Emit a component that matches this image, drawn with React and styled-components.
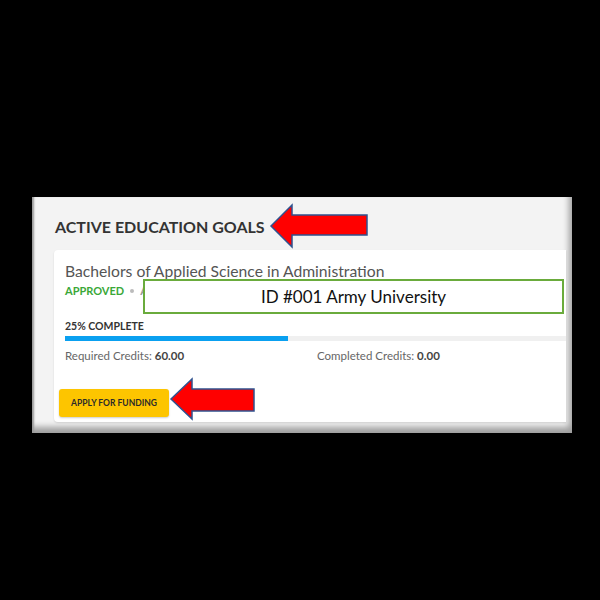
import React from "react";
import styled, { createGlobalStyle } from "styled-components";

const Global = createGlobalStyle`
  html, body { margin: 0; padding: 0; background: #000; }
  #root { width: 600px; height: 600px; background: #000; }
`;

const Page = styled.div`
  width: 600px;
  height: 600px;
  background: #000;
  padding: 197px 0 0 32px;
  box-sizing: border-box;
`;

const Frame = styled.div`
  position: relative;
  width: 540px;
  height: 236px;
  background: #f3f3f3;
  box-sizing: border-box;
  padding: 21px 6px 11px 22px;
  display: flex;
  flex-direction: column;
  box-shadow: inset 3px 0 2px -1px #9a9a9a, inset -7px -10px 6px -4px rgba(0, 0, 0, 0.35);
  font-family: Lato, "Liberation Sans", sans-serif;
`;

const Heading = styled.h2`
  margin: 0 0 14px 1px;
  font-size: 16px;
  line-height: 18px;
  font-weight: 700;
  color: #333;
`;

const Card = styled.div`
  flex: 1;
  background: #fff;
  border-radius: 4px 0 0 4px;
  box-shadow: 0 1px 2px rgba(0, 0, 0, 0.12);
  display: flex;
  flex-direction: column;
  padding: 11px 0 5px 0;
`;

const Body = styled.div`
  padding: 0 0 0 11px;
  display: flex;
  flex-direction: column;
`;

const Title = styled.div`
  font-size: 15.7px;
  line-height: 20px;
  color: #555;
`;

const StatusRow = styled.div`
  display: flex;
  align-items: center;
  gap: 6px;
  margin-top: 3px;
  font-size: 11px;
  line-height: 14px;
  font-weight: 700;
`;

const Status = styled.span`
  color: ${(p) => p.$color};
`;

const Dot = styled.span`
  width: 4px;
  height: 4px;
  border-radius: 50%;
  background: #bbb;
`;

const ProgressLabel = styled.div`
  margin-top: 22px;
  font-size: 10.5px;
  line-height: 13px;
  font-weight: 700;
  color: #333;
`;

const Track = styled.div`
  margin-top: 3px;
  height: 5px;
  background: #f0f0f0;
`;

const Fill = styled.div`
  height: 100%;
  background: #0aa0f0;
`;

const Credits = styled.div`
  display: grid;
  grid-template-columns: 252px auto;
  margin-top: 7px;
  font-size: 11.5px;
  line-height: 16px;
  color: #666;
`;

const Value = styled.b`
  color: #444;
`;

const Footer = styled.div`
  margin-top: auto;
  padding: 0 0 0 5px;
`;

const FundButton = styled.button`
  width: 110px;
  height: 28px;
  border: none;
  border-radius: 3px;
  background: #fdc500;
  box-shadow: 0 1px 2px rgba(0, 0, 0, 0.2);
  font-family: Lato, "Liberation Sans", sans-serif;
  font-size: 8.5px;
  font-weight: 700;
  color: #2a2a2a;
  padding: 0;
`;

const IdBox = styled.div`
  position: absolute;
  left: 111px;
  top: 82px;
  width: 421px;
  height: 35px;
  box-sizing: border-box;
  border: 2px solid #6aab3c;
  background: #fff;
  display: flex;
  align-items: center;
  justify-content: center;
  font-family: Lato, "Liberation Sans", sans-serif;
  font-size: 17px;
  color: #111;
`;

const ArrowSvg = styled.svg`
  position: absolute;
  left: ${(p) => p.$x}px;
  top: ${(p) => p.$y}px;
  overflow: visible;
`;

function Arrow({ x, y, w, h, s1, s2 }) {
  const mid = h / 2;
  const pts = `0,${mid} 21,0 21,${s1} ${w},${s1} ${w},${s2} 21,${s2} 21,${h}`;
  return (
    <ArrowSvg $x={x} $y={y} width={w} height={h} viewBox={`0 0 ${w} ${h}`}>
      <polygon points={pts} fill="#ff0000" stroke="#2f528f" strokeWidth="1.5" strokeLinejoin="miter" />
    </ArrowSvg>
  );
}

export default function App() {
  return (
    <>
      <Global />
      <Page>
        <Frame>
          <Heading>ACTIVE EDUCATION GOALS</Heading>
          <Card>
            <Body>
              <Title>Bachelors of Applied Science in Administration</Title>
              <StatusRow>
                <Status $color="#3aa838">APPROVED</Status>
                <Dot />
                <Status $color="#999">ARMY UNIVERSITY</Status>
              </StatusRow>
              <ProgressLabel>25% COMPLETE</ProgressLabel>
              <Track>
                <Fill style={{ width: "44.6%" }} />
              </Track>
              <Credits>
                <span>
                  Required Credits: <Value>60.00</Value>
                </span>
                <span>
                  Completed Credits: <Value>0.00</Value>
                </span>
              </Credits>
            </Body>
            <Footer>
              <FundButton>APPLY FOR FUNDING</FundButton>
            </Footer>
          </Card>
          <IdBox>ID #001 Army University</IdBox>
          <Arrow x={239} y={8} w={96} h={42} s1={10} s2={30} />
          <Arrow x={139} y={182} w={83} h={40} s1={10} s2={32} />
        </Frame>
      </Page>
    </>
  );
}
